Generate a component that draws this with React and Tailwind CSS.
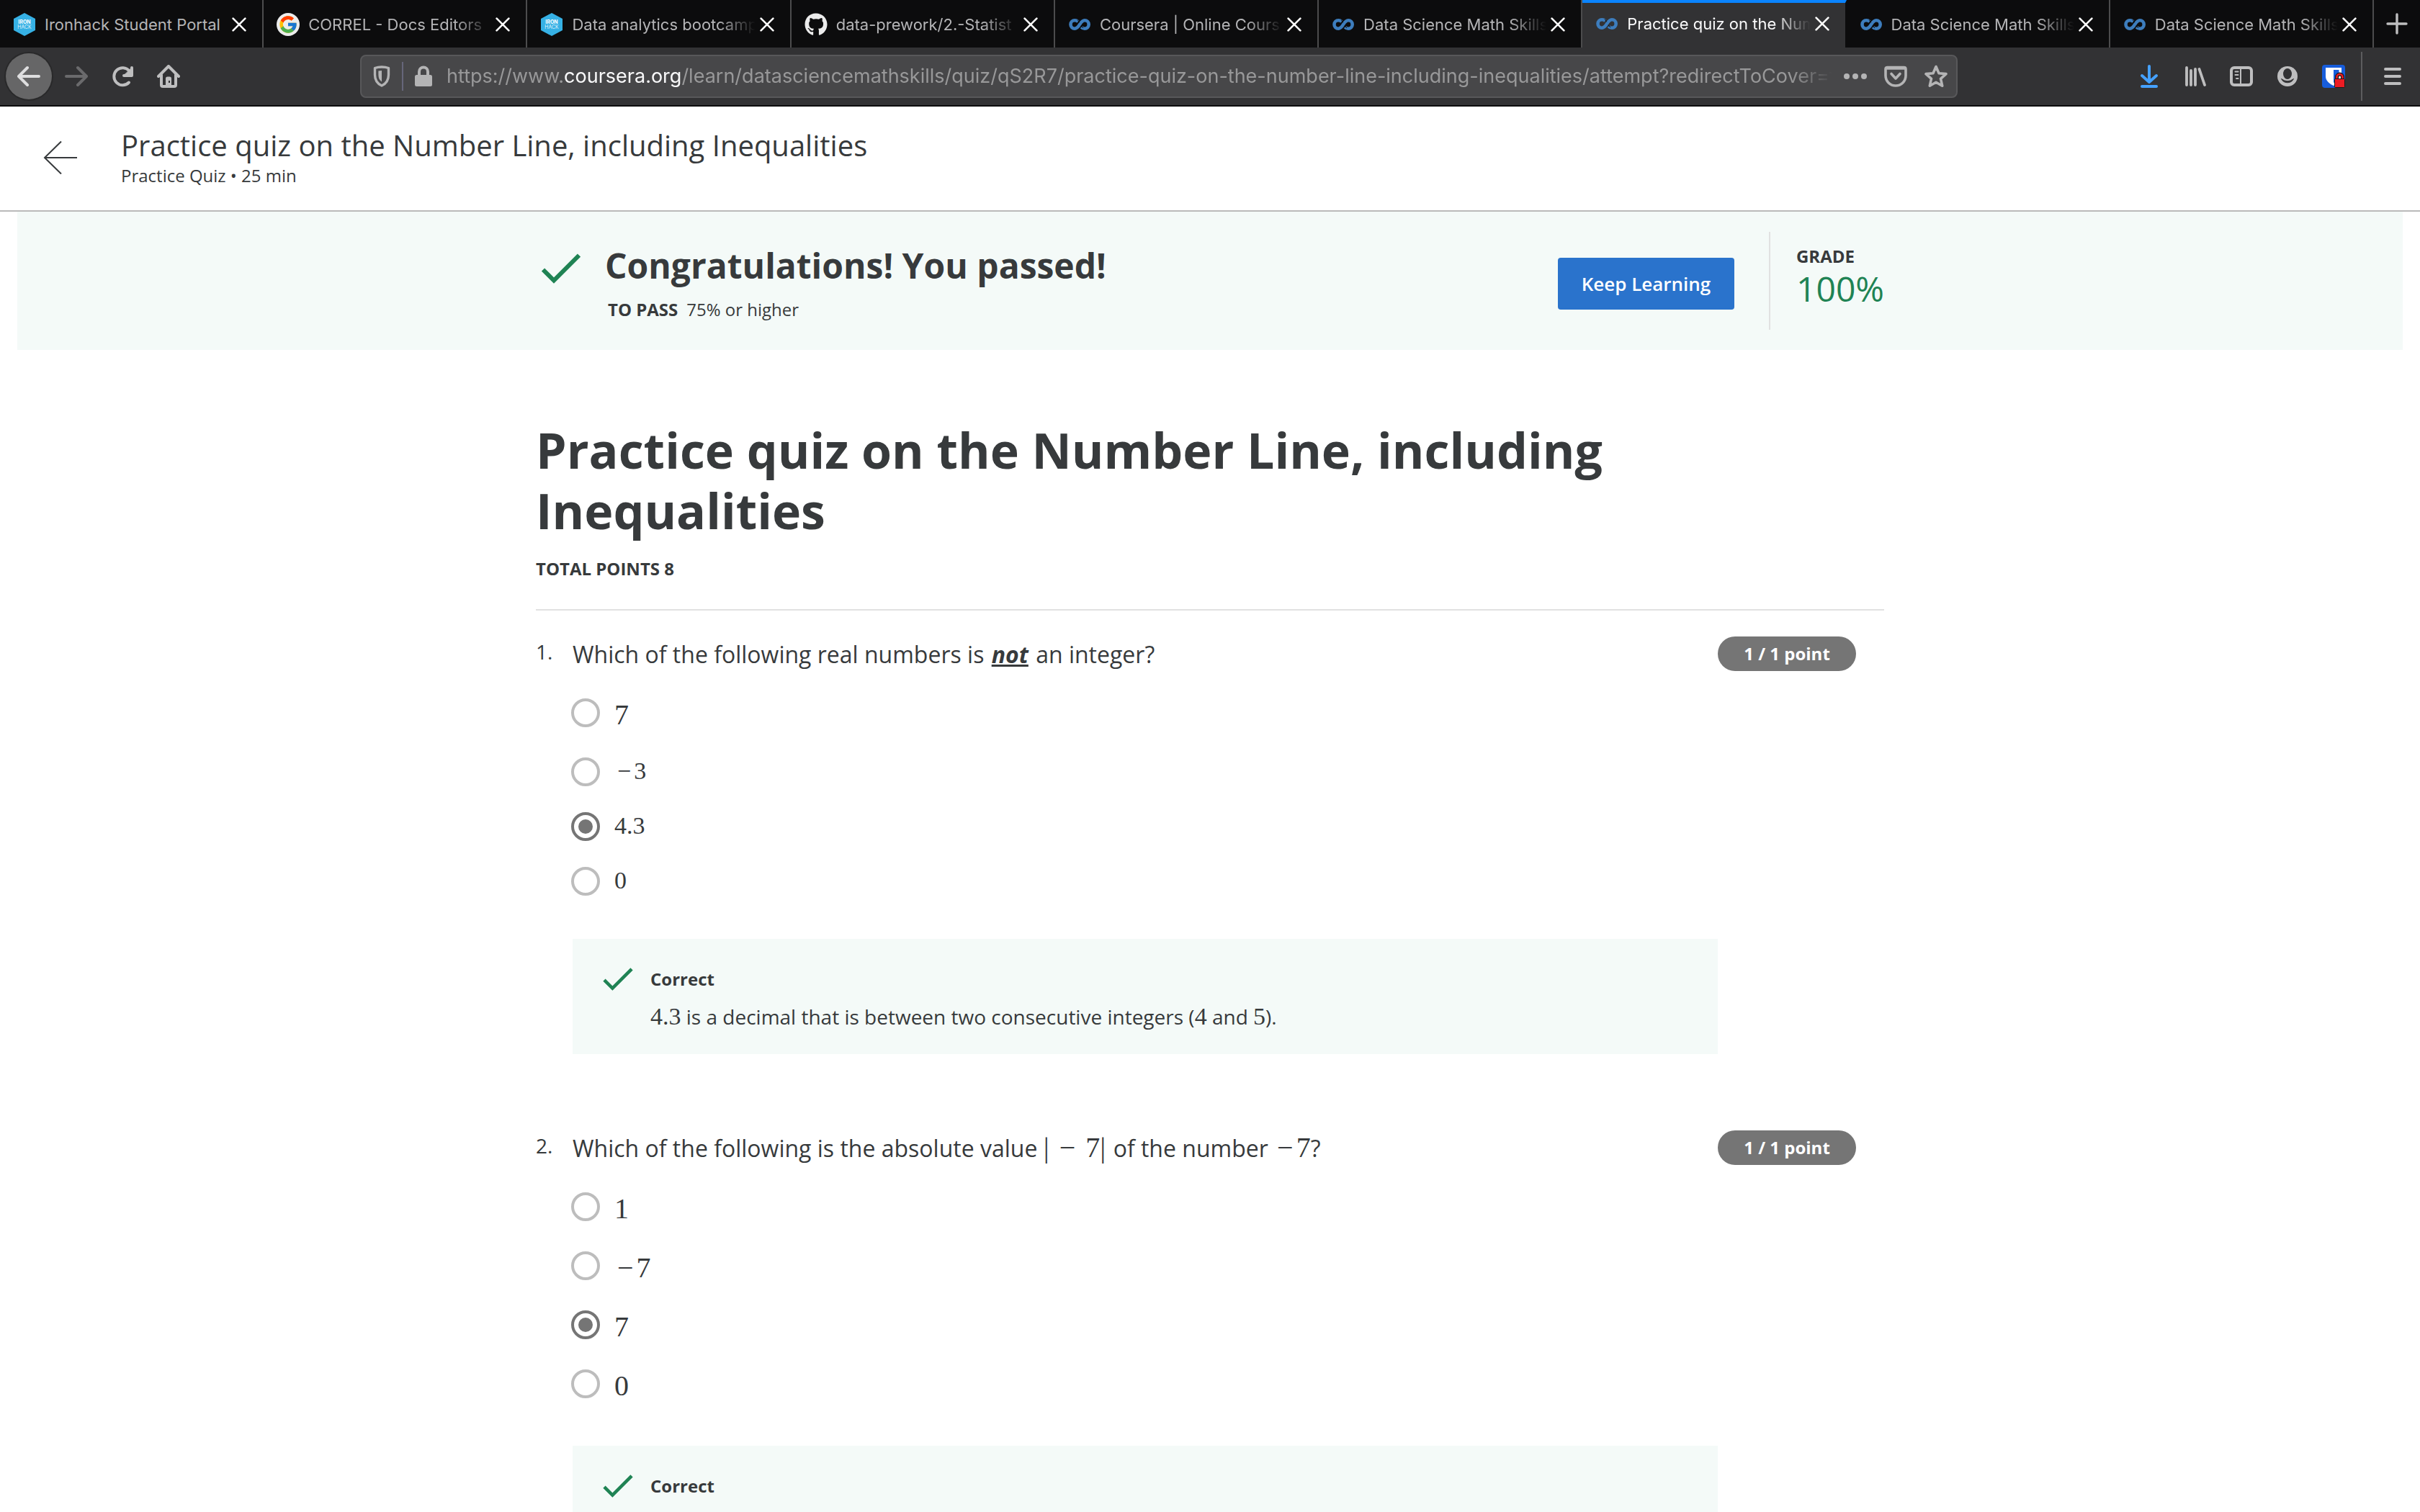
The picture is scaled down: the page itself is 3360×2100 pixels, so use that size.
import React from "react";
import { FcGoogle } from "react-icons/fc";
import { FaGithub } from "react-icons/fa";

function IronhackIcon() {
  return (
    <svg viewBox="0 0 32 32" className="size-8 shrink-0" aria-hidden="true">
      <path d="M16 0 31 8V24L16 32 1 24V8Z" fill="#36b1e5" />
      <text x="16" y="15" textAnchor="middle" fontSize="7" fontWeight="700" fill="#fff" fontFamily="Inter, sans-serif">IRON</text>
      <text x="16" y="22" textAnchor="middle" fontSize="7" fontWeight="300" fill="#fff" fontFamily="Inter, sans-serif">HACK</text>
    </svg>
  );
}

function GoogleIcon() {
  return (
    <span className="flex size-8 shrink-0 items-center justify-center rounded-full bg-[#ececec]">
      <FcGoogle className="size-7" />
    </span>
  );
}

function GithubIcon() {
  return <FaGithub className="size-8 shrink-0 text-[#ececec]" />;
}

function CourseraIcon() {
  return (
    <svg viewBox="0 0 32 32" className="size-8 shrink-0" fill="none" stroke="#3d7dbd" strokeWidth="4.6" aria-hidden="true">
      <path d="M13.8 12.1C12.5 10.9 11 10.3 9.2 10.3a5.7 5.7 0 0 0 0 11.4c6.6 0 7.2-11.4 13.8-11.4a5.7 5.7 0 0 1 0 11.4c-1.8 0-3.4-.7-4.6-2" />
      <path d="m13.2 9.6 2.6 3.8M18 17.6l3 3.4" stroke="#0c0c0d" strokeWidth="1" />
    </svg>
  );
}

const tabs = [
  { title: "Ironhack Student Portal", Icon: IronhackIcon, fits: true },
  { title: "CORREL - Docs Editors", Icon: GoogleIcon },
  { title: "Data analytics bootcamp", Icon: IronhackIcon },
  { title: "data-prework/2.-Statist", Icon: GithubIcon },
  { title: "Coursera | Online Cours", Icon: CourseraIcon },
  { title: "Data Science Math Skills", Icon: CourseraIcon },
  { title: "Practice quiz on the Num", Icon: CourseraIcon, active: true },
  { title: "Data Science Math Skills", Icon: CourseraIcon },
  { title: "Data Science Math Skills", Icon: CourseraIcon },
];

function Tab({ title, Icon, active, fits }) {
  return (
    <div
      className={
        active
          ? "flex min-w-0 flex-1 items-center border-t-4 border-r-2 border-t-[#0a84ff] border-r-[#0c0c0d] bg-[#323234] pb-1 pl-[18px] text-[#f9f9fa]"
          : "flex min-w-0 flex-1 items-center border-r-2 border-[#4c4c4d] pt-0.5 pl-[18px] text-[#b4b4b6]"
      }
    >
      <Icon />
      <span
        className={
          fits
            ? "ml-3 min-w-0 flex-1 text-[22px] leading-8 whitespace-nowrap"
            : "ml-3 min-w-0 flex-1 overflow-hidden text-[22px] leading-8 whitespace-nowrap mask-r-from-80% mask-r-to-100%"
        }
      >
        {title}
      </span>
      <button type="button" aria-label={"Close " + title} className="mr-4 flex size-8 shrink-0 items-center justify-center">
        <svg viewBox="0 0 20 20" className="size-5" stroke="#fff" strokeWidth="2.6" strokeLinecap="round" aria-hidden="true">
          <path d="M1.6 1.6 18.4 18.4M18.4 1.6 1.6 18.4" />
        </svg>
      </button>
    </div>
  );
}

function ToolButton({ label, children }) {
  return (
    <button type="button" aria-label={label} className="flex size-16 shrink-0 items-center justify-center">
      {children}
    </button>
  );
}

function Stroke({ children, width = 4, className = "size-8" }) {
  return (
    <svg viewBox="0 0 32 32" className={className} fill="none" stroke="currentColor" strokeWidth={width} strokeLinecap="round" strokeLinejoin="round" aria-hidden="true">
      {children}
    </svg>
  );
}

function BrowserChrome() {
  return (
    <header className="shrink-0 border-b-2 border-[#0c0c0d] bg-[#323234] font-[Inter,sans-serif]">
      <div className="flex h-[66px] bg-[#0c0c0d]">
        {tabs.map((tab, i) => (
          <Tab key={i} {...tab} />
        ))}
        <button type="button" aria-label="New tab" className="flex w-16 items-center justify-center text-[#bebebf]">
          <Stroke width={3.4}>
            <path d="M16 3v26M3 16h26" />
          </Stroke>
        </button>
      </div>
      <nav className="flex h-20 items-center pl-2 text-[#bebebf]">
        <button type="button" aria-label="Back" className="flex size-16 shrink-0 items-center justify-center rounded-full bg-[#666667] text-[#dededf] ring-2 ring-[#29292a]">
          <Stroke>
            <path d="M30 16H3M14 4 2 16l12 12" />
          </Stroke>
        </button>
        <button type="button" aria-label="Forward" className="ml-0.5 flex size-16 shrink-0 items-center justify-center text-[#6a6a6c]">
          <Stroke>
            <path d="M2 16h27M18 4l12 12-12 12" />
          </Stroke>
        </button>
        <ToolButton label="Reload">
          <Stroke>
            <path d="M25 24.5a12 12 0 1 1 .5-16M29 4v11H18" />
            <path d="M20 13h7v-7z" fill="currentColor" strokeWidth="1" />
          </Stroke>
        </ToolButton>
        <ToolButton label="Home">
          <Stroke>
            <path d="M2 16 16 2l14 14M6 14v14q0 2 2 2h16q2 0 2-2V14" />
            <path d="M12 30V19q0-2.600 2.600-2.600h2.800q2.600 0 2.600 2.600v11z" fill="currentColor" stroke="none" />
            <rect x="16" y="22" width="2" height="3" fill="#323234" stroke="none" />
          </Stroke>
        </ToolButton>
        <div className="ml-[234px] flex h-[60px] min-w-0 flex-1 items-center rounded-lg border-2 border-[#58585a] bg-[#474749] text-[#b4b4b5]">
          <button type="button" aria-label="Tracking protection" className="ml-3 flex w-8 justify-center">
            <svg viewBox="0 0 32 32" className="size-8" aria-hidden="true">
              <path d="M16 3c4 0 7 .6 9.500 1.500V14c0 8-4 12.500-9.500 15-5.500-2.500-9.500-7-9.500-15V4.500C9 3.600 12 3 16 3Z" fill="none" stroke="currentColor" strokeWidth="3.4" strokeLinejoin="round" />
              <path d="M16 8v15.500c-3-2-4.600-5-4.600-9.500V8.600Z" fill="currentColor" />
            </svg>
          </button>
          <span className="mx-3 h-10 w-0.5 bg-[#66667a]" />
          <button type="button" aria-label="Site information" className="flex w-8 justify-center">
            <svg viewBox="0 0 32 32" className="size-8" aria-hidden="true">
              <rect x="4" y="14" width="24" height="16" rx="2.500" fill="currentColor" />
              <path d="M10 15V9.500a6 6 0 0 1 12 0V15" fill="none" stroke="currentColor" strokeWidth="4" />
            </svg>
          </button>
          <a href="#quiz" className="ml-4 min-w-0 flex-1 overflow-hidden text-[27px] leading-10 whitespace-nowrap text-[#989899] mask-r-from-97% mask-r-to-100%">
            https://www.<span className="text-[#f9f9fa]">coursera.org</span>/learn/datasciencemathskills/quiz/qS2R7/practice-quiz-on-the-number-line-including-inequalities/attempt?redirectToCover=true
          </a>
          <div className="mr-3 ml-4 flex gap-6">
            <button type="button" aria-label="Page actions">
              <svg viewBox="0 0 32 32" className="size-8" fill="currentColor" aria-hidden="true">
                <circle cx="4" cy="16" r="4" />
                <circle cx="16" cy="16" r="4" />
                <circle cx="28" cy="16" r="4" />
              </svg>
            </button>
            <button type="button" aria-label="Save to Pocket">
              <Stroke width={3.6}>
                <path d="M4.500 3.500h23q2.500 0 2.500 2.500v9a14 14 0 0 1-28 0V6q0-2.500 2.500-2.500Z" />
                <path d="m10 12.500 6 6.500 6-6.500" />
                <path d="M3 5h26" />
              </Stroke>
            </button>
            <button type="button" aria-label="Bookmark this page">
              <Stroke width={3.6}>
                <path d="m16 2.500 4 9.200 10 .900-7.500 6.700 2.200 9.900L16 24.200l-8.700 5 2.200-9.900L2 12.600l10-.9Z" />
              </Stroke>
            </button>
          </div>
        </div>
        <div className="ml-[234px] flex items-center">
          <ToolButton label="Downloads">
            <Stroke className="size-8 text-[#45a1ff]">
              <path d="M16 2v21M6 15l10 9 10-9" />
              <path d="M6 30h20" />
            </Stroke>
          </ToolButton>
          <ToolButton label="Library">
            <Stroke width={3.8}>
              <path d="M4 4v24M10 8v20M16 6v22M21.500 6l7.500 22" />
            </Stroke>
          </ToolButton>
          <ToolButton label="Sidebars">
            <Stroke>
              <rect x="2" y="4" width="28" height="24" rx="4" />
              <path d="M15 4v24" strokeWidth="2" />
              <path d="M7.500 9.500h4M7.500 14h4M9 19h2.500" strokeWidth="2" />
            </Stroke>
          </ToolButton>
          <ToolButton label="Account">
            <svg viewBox="0 0 32 32" className="size-8" aria-hidden="true">
              <circle cx="16" cy="16" r="14" fill="currentColor" />
              <ellipse cx="16" cy="12.500" rx="6" ry="7.500" fill="#323234" />
              <path d="M7.500 19.500Q16 26 24.500 19.500A9.500 9.500 0 0 1 7.500 19.500Z" fill="#323234" stroke="#323234" />
            </svg>
          </ToolButton>
          <ToolButton label="Bitwarden">
            <svg viewBox="0 0 32 32" className="size-8" aria-hidden="true">
              <rect width="32" height="32" rx="4" fill="#175ddc" />
              <path d="M5 4h22v12c0 6-5 10.500-11 13C10 26.500 5 22 5 16Z" fill="#fff" />
              <path d="M16 7h7.500v9c0 4-3.500 7-7.500 9Z" fill="#175ddc" />
              <path d="M20.500 20v-3a4 4 0 0 1 8 0v3" fill="none" stroke="#1b1b1b" strokeWidth="5" />
              <path d="M20.500 20v-3a4 4 0 0 1 8 0v3" fill="none" stroke="#ec1c24" strokeWidth="2.600" />
              <rect x="17.500" y="19.500" width="14" height="12" rx="1" fill="#ec1c24" stroke="#1b1b1b" />
            </svg>
          </ToolButton>
          <span className="ml-1.5 h-[68px] w-0.5 bg-[#5c5c5e]" />
          <button type="button" aria-label="Open menu" className="mr-1.5 ml-2.5 flex size-16 items-center justify-center">
            <Stroke>
              <path d="M6 6h20M6 16h20M6 26h20" />
            </Stroke>
          </button>
        </div>
      </nav>
    </header>
  );
}

function Check({ className }) {
  return (
    <svg viewBox="0 0 54 42" className={className} fill="none" stroke="#1f8354" strokeWidth="6" aria-hidden="true">
      <path d="M2 22.500 17 37.500 52 2.500" />
    </svg>
  );
}

function Minus() {
  return <span className="mx-1">−</span>;
}

function MathText({ children }) {
  return <span className="font-['Liberation_Serif',serif] text-[34px] leading-none">{children}</span>;
}

function BigMath({ children, className = "" }) {
  return <span className={"font-['Liberation_Serif',serif] text-[40px] leading-none " + className}>{children}</span>;
}

function Option({ name, value, negative, large, checked }) {
  return (
    <label className="flex items-start gap-5 pb-9">
      <input
        type="radio"
        name={name}
        defaultChecked={checked}
        className="grid size-10 shrink-0 appearance-none place-content-center rounded-full border-4 border-[#bdbdbd] before:size-5 before:rounded-full before:content-[''] checked:border-[#757575] checked:before:bg-[#757575]"
      />
      <span
        className={
          large
            ? "font-['Liberation_Serif',serif] text-[40px] leading-[46px]"
            : "font-['Liberation_Serif',serif] text-[34px] leading-[38px]"
        }
      >
        {negative && <Minus />}
        {value}
      </span>
    </label>
  );
}

function Question({ number, prompt, options, feedback }) {
  const name = "question-" + number;
  return (
    <li className="flex items-start">
      <span className="w-[51px] shrink-0 text-[28px] leading-[42px]">{number}.</span>
      <fieldset className="min-w-0 flex-1">
        <legend className="text-[32px] leading-[50px]">{prompt}</legend>
        <div className="mt-9 -ml-0.5">
          {options.map((o, i) => (
            <Option key={i} name={name} {...o} />
          ))}
        </div>
        <div className="mt-6 flex items-start bg-[#f4faf8] pt-10 pb-8 pl-[42px]">
          <Check className="h-8 w-[42px]" />
          <div className="ml-6">
            <p className="text-2xl leading-8 font-bold">Correct</p>
            {feedback && <p className="mt-4 text-[28px] leading-10">{feedback}</p>}
          </div>
        </div>
      </fieldset>
      <span className="mr-[39px] w-48 shrink-0 rounded-full bg-[#757575] py-2 text-center text-2xl leading-8 font-bold text-white">
        1 / 1 point
      </span>
    </li>
  );
}

export default function App() {
  return (
    <div className="flex h-screen flex-col overflow-hidden bg-white font-['Open_Sans',sans-serif] text-[#373a3c]">
      <BrowserChrome />
      <div className="flex shrink-0 items-center border-b-2 border-[#bababa] pt-7 pb-8 pl-[60px]">
        <button type="button" aria-label="Back to course" className="flex">
          <svg viewBox="0 0 48 48" className="size-12" fill="none" stroke="#373a3c" strokeWidth="2" aria-hidden="true">
            <path d="M47 25H2M25 2.500 2 25l23 22.500" />
          </svg>
        </button>
        <div className="ml-[60px]">
          <p className="text-[40px] leading-[52px]">Practice quiz on the Number Line, including Inequalities</p>
          <p className="text-2xl leading-8">Practice Quiz • 25 min</p>
        </div>
      </div>
      <main id="quiz" className="min-h-0 flex-1 overflow-hidden">
        <section className="mx-6 bg-[#f4faf8]">
          <div className="mx-auto flex max-w-[1872px] items-start">
            <Check className="mt-[58px] ml-2 h-[42px] w-[54px]" />
            <div className="ml-[34px] flex-1 py-10">
              <h2 className="text-5xl leading-[70px] font-bold">Congratulations! You passed!</h2>
              <p className="mt-2.5 ml-1 text-2xl leading-8">
                <strong className="mr-3 font-bold">TO PASS</strong>75% or higher
              </p>
            </div>
            <div className="mt-7 flex items-start">
              <button type="button" className="mt-9 h-[72px] w-[245px] rounded bg-[#2a73cc] text-[26px] leading-9 font-semibold text-white">
                Keep Learning
              </button>
              <div className="ml-12 h-[136px] border-l-2 border-[#e1e1e1] pt-[18px] pl-9">
                <p className="text-2xl leading-8 font-bold">GRADE</p>
                <p className="text-5xl leading-[58px] text-[#1f8354]">100%</p>
              </div>
            </div>
          </div>
        </section>
        <section className="mx-auto mt-[97px] max-w-[1872px]">
          <div className="border-b-2 border-[#e1e1e1] pb-10">
            <h1 className="max-w-[1600px] text-[68px] leading-[84px] font-bold">
              Practice quiz on the Number Line, including Inequalities
            </h1>
            <p className="mt-[23px] text-2xl leading-8 font-bold">TOTAL POINTS 8</p>
          </div>
          <ol className="mt-9 flex flex-col gap-[106px]">
            <Question
              number={1}
              prompt={
                <>
                  Which of the following real numbers is <strong className="mx-0.5 font-bold italic underline">not</strong> an integer?
                </>
              }
              options={[
                { value: "7", large: true },
                { value: "3", negative: true },
                { value: "4.3", checked: true },
                { value: "0" },
              ]}
              feedback={
                <>
                  <MathText>4.3</MathText> is a decimal that is between two consecutive integers (<MathText>4</MathText> and{" "}
                  <MathText>5</MathText>).
                </>
              }
            />
            <Question
              number={2}
              prompt={
                <>
                  Which of the following is the absolute value <BigMath>|</BigMath>
                  <BigMath className="mx-3.5">−</BigMath>
                  <BigMath className="mr-0.5">7|</BigMath> of the number{" "}
                  <BigMath>
                    <Minus />7
                  </BigMath>
                  ?
                </>
              }
              options={[
                { value: "1", large: true },
                { value: "7", negative: true, large: true },
                { value: "7", large: true, checked: true },
                { value: "0", large: true },
              ]}
            />
          </ol>
        </section>
      </main>
    </div>
  );
}
